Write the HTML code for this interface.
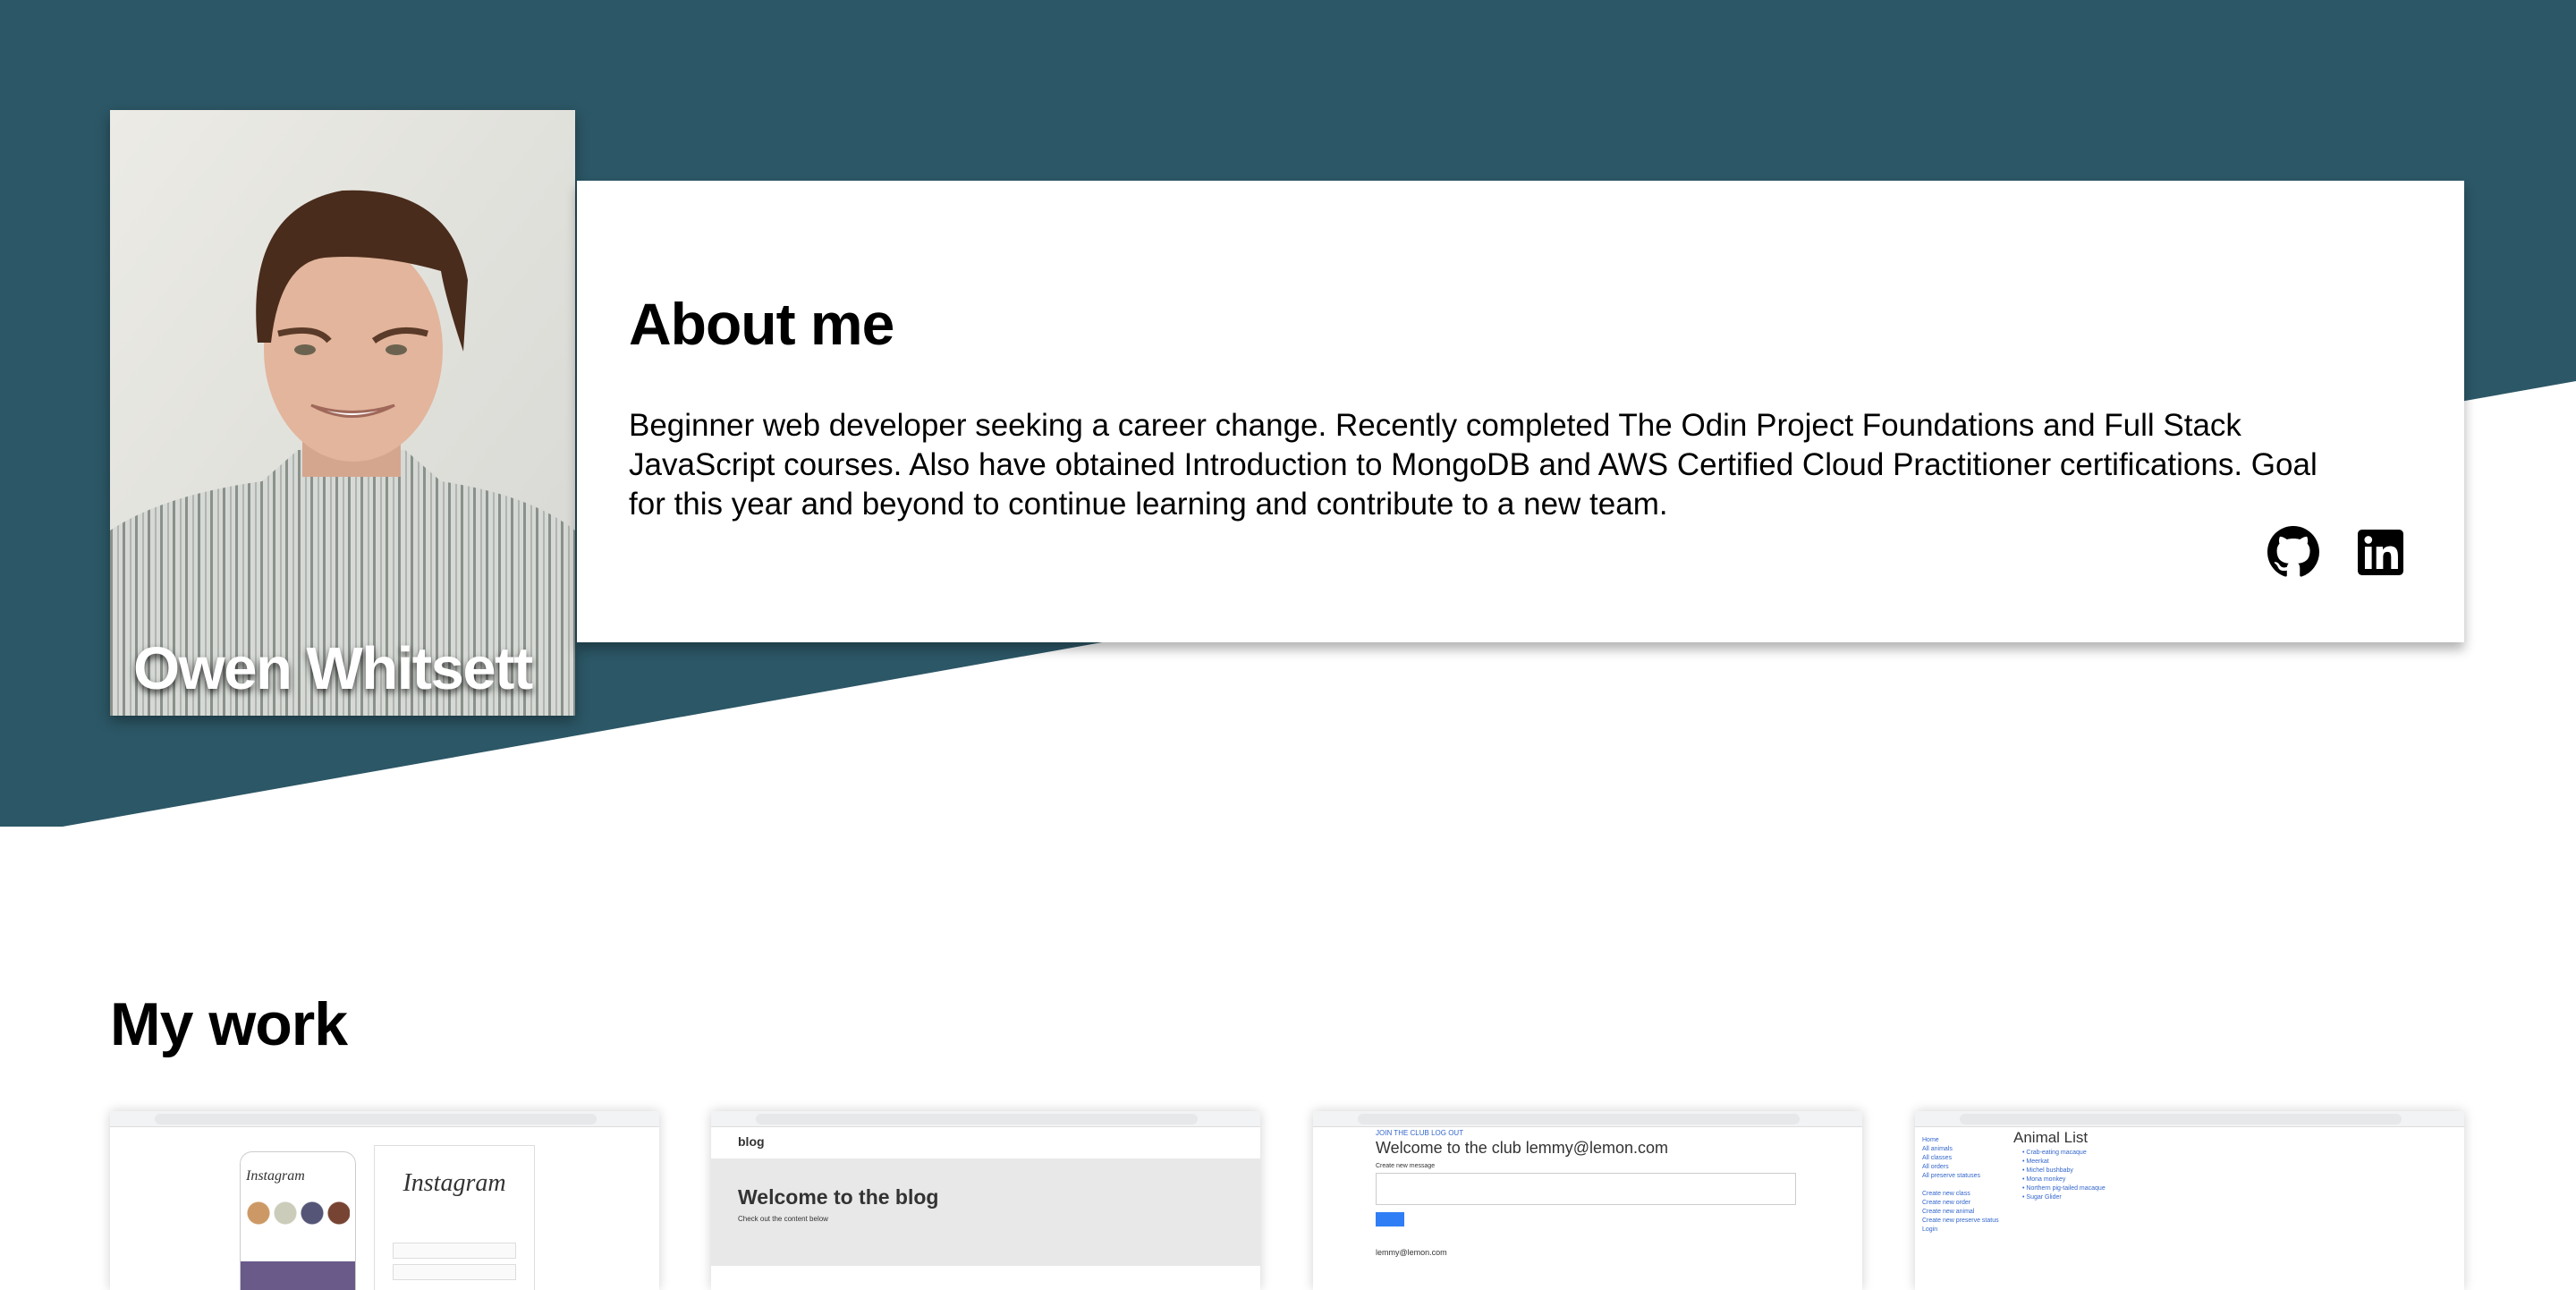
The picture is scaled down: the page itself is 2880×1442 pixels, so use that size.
<!DOCTYPE html>
<html><head><meta charset="utf-8">
<style>
*{margin:0;padding:0;box-sizing:border-box}
html,body{width:2880px;height:1414px;overflow:hidden;background:#fff;font-family:"Liberation Sans",sans-serif;color:#000}
.bg{position:absolute;left:0;top:0}
.photo{position:absolute;left:123px;top:123px;width:520px;height:677px;overflow:hidden;box-shadow:0 6px 14px rgba(0,0,0,.35)}
.name{position:absolute;left:26px;bottom:14px;font-size:67px;font-weight:bold;color:#fff;letter-spacing:-1.5px;text-shadow:0 4px 8px rgba(0,0,0,.7);white-space:nowrap}
.card{position:absolute;left:645px;top:202px;width:2110px;height:516px;background:#fff;box-shadow:0 8px 12px rgba(0,0,0,.3)}
h1{position:absolute;left:58px;top:122px;font-size:66px;font-weight:bold;letter-spacing:-1px}
.p{position:absolute;left:58px;top:252px;width:1935px;font-size:35px;line-height:44px}
.work{position:absolute;left:123px;top:1106px;font-size:68px;font-weight:bold;letter-spacing:-1px}
.shot{position:absolute;top:1242px;width:614px;height:200px;background:#fff;box-shadow:0 0 12px rgba(0,0,0,.18);overflow:hidden;font-size:10px;color:#333}
.bar{height:18px;background:#f1f3f4;border-bottom:1px solid #ddd;position:relative}
.bar i{position:absolute;left:50px;top:3px;right:70px;height:12px;background:#e6e8ea;border-radius:6px}
</style></head><body>
<svg class="bg" width="2880" height="1414"><polygon points="0,0 2880,0 2880,426 70,924 0,924" fill="#2c5766"/></svg>

<div class="photo">
<svg width="520" height="677" viewBox="0 0 520 677">
<defs>
<linearGradient id="w" x1="0" y1="0" x2="1" y2="1"><stop offset="0" stop-color="#ecebe5"/><stop offset="1" stop-color="#d6d7d3"/></linearGradient>
<pattern id="st" width="14" height="10" patternUnits="userSpaceOnUse"><rect width="14" height="10" fill="#d6d9d5"/><rect x="0" width="3" height="10" fill="#8a918b"/><rect x="8" width="2" height="10" fill="#b0b5b0"/></pattern>
</defs>
<rect width="520" height="677" fill="url(#w)"/>
<path d="M0,470 Q60,430 170,415 L210,380 L330,380 L370,415 Q470,430 520,470 L520,677 L0,677Z" fill="url(#st)"/>
<rect x="215" y="330" width="110" height="80" fill="#d5a68e"/>
<ellipse cx="272" cy="268" rx="100" ry="125" fill="#e2b59c"/>
<path d="M165,260 Q150,110 260,90 Q380,85 400,190 L395,270 Q375,210 370,180 Q300,160 240,165 Q190,170 180,260Z" fill="#4a2c1c"/>
<path d="M188,250 Q230,240 245,258 M295,258 Q320,240 355,250" stroke="#5a3a28" stroke-width="7" fill="none"/>
<ellipse cx="218" cy="268" rx="12" ry="6" fill="#6b6350"/><ellipse cx="320" cy="268" rx="12" ry="6" fill="#6b6350"/>
<path d="M225,330 Q270,355 318,330 Q270,345 225,330Z" fill="#fff" stroke="#a0685a" stroke-width="3"/>
</svg>
<div class="name">Owen Whitsett</div>
</div>

<div class="card">
<h1>About me</h1>
<div class="p">Beginner web developer seeking a career change. Recently completed The Odin Project Foundations and Full Stack JavaScript courses. Also have obtained Introduction to MongoDB and AWS Certified Cloud Practitioner certifications. Goal for this year and beyond to continue learning and contribute to a new team.</div>
<svg style="position:absolute;left:1890px;top:386px" width="58" height="58" viewBox="0 0 16 16"><path fill="#000" d="M8 0C3.58 0 0 3.58 0 8c0 3.54 2.29 6.53 5.47 7.59.4.07.55-.17.55-.38 0-.19-.01-.82-.01-1.49-2.01.37-2.53-.49-2.69-.94-.09-.23-.48-.94-.82-1.13-.28-.15-.68-.52-.01-.53.63-.01 1.08.58 1.23.82.72 1.21 1.87.87 2.33.66.07-.52.28-.87.51-1.07-1.78-.2-3.64-.89-3.64-3.95 0-.87.31-1.59.82-2.15-.08-.2-.36-1.02.08-2.12 0 0 .67-.21 2.2.82.64-.18 1.32-.27 2-.27.68 0 1.36.09 2 .27 1.53-1.04 2.2-.82 2.2-.82.44 1.1.16 1.92.08 2.12.51.56.82 1.27.82 2.15 0 3.07-1.87 3.75-3.65 3.95.29.25.54.73.54 1.48 0 1.07-.01 1.93-.01 2.2 0 .21.15.46.55.38A8.013 8.013 0 0 0 16 8c0-4.42-3.58-8-8-8z"/></svg>
<svg style="position:absolute;left:1991px;top:390px" width="51" height="51" viewBox="0 0 16 16"><rect width="16" height="16" rx="1.5" fill="#000"/><circle cx="3.7" cy="3.6" r="1.35" fill="#fff"/><rect x="2.5" y="6" width="2.4" height="7.8" fill="#fff"/><path d="M6.5 6h2.3v1.1c.4-.7 1.3-1.3 2.5-1.3 2.3 0 2.8 1.5 2.8 3.5v4.5h-2.4v-4c0-1-.1-2-1.3-2-1.3 0-1.5.9-1.5 1.9v4.1H6.5z" fill="#fff"/></svg>
</div>

<div class="work">My work</div>

<div class="shot" style="left:123px"><div class="bar"><i></i></div>
<div style="position:absolute;left:145px;top:45px;width:130px;height:170px;border:1px solid #ccc;border-radius:14px;background:#fff"><div style="font:italic 16px 'Liberation Serif';margin:18px 6px">Instagram</div><div style="margin:0 6px;height:28px;background:radial-gradient(circle at 14px 14px,#c96 12px,transparent 13px),radial-gradient(circle at 44px 14px,#ccb 12px,transparent 13px),radial-gradient(circle at 74px 14px,#557 12px,transparent 13px),radial-gradient(circle at 104px 14px,#743 12px,transparent 13px)"></div><div style="margin-top:40px;height:60px;background:#6a5a8a"></div></div>
<div style="position:absolute;left:295px;top:38px;width:180px;height:170px;border:1px solid #ddd;background:#fff"><div style="font:italic 28px 'Liberation Serif';text-align:center;margin-top:26px">Instagram</div><div style="margin:50px 20px 0;height:18px;border:1px solid #ddd;background:#fafafa"></div><div style="margin:6px 20px 0;height:18px;border:1px solid #ddd;background:#fafafa"></div></div></div>

<div class="shot" style="left:795px"><div class="bar"><i></i></div><div style="height:35px;padding:8px 30px;font-size:14px;font-weight:bold">blog</div><div style="height:120px;background:#e8e8e8;padding:30px"><div style="font-size:23px;font-weight:bold">Welcome to the blog</div><div style="font-size:8px;margin-top:6px">Check out the content below</div></div></div>

<div class="shot" style="left:1468px"><div class="bar"><i></i></div><div style="padding:2px 70px"><div style="color:#36c;font-size:8px">JOIN THE CLUB LOG OUT</div><div style="font-size:18px;margin-top:2px">Welcome to the club lemmy@lemon.com</div><div style="font-size:7px;margin-top:6px">Create new message</div><div style="height:36px;width:470px;border:1px solid #ccc;margin-top:4px"></div><div style="width:32px;height:16px;background:#2f7ef5;margin-top:8px"></div><div style="font-size:9px;margin-top:24px">lemmy@lemon.com</div></div></div>

<div class="shot" style="left:2141px"><div class="bar"><i></i></div><div style="position:absolute;left:8px;top:28px;color:#36c;font-size:7px;line-height:10px">Home<br>All animals<br>All classes<br>All orders<br>All preserve statuses<br><br>Create new class<br>Create new order<br>Create new animal<br>Create new preserve status<br>Login</div><div style="position:absolute;left:110px;top:20px;font-size:17px">Animal List</div><div style="position:absolute;left:120px;top:42px;font-size:7px;line-height:10px;color:#36c">• Crab-eating macaque<br>• Meerkat<br>• Michel bushbaby<br>• Mona monkey<br>• Northern pig-tailed macaque<br>• Sugar Glider</div></div>
</body></html>
